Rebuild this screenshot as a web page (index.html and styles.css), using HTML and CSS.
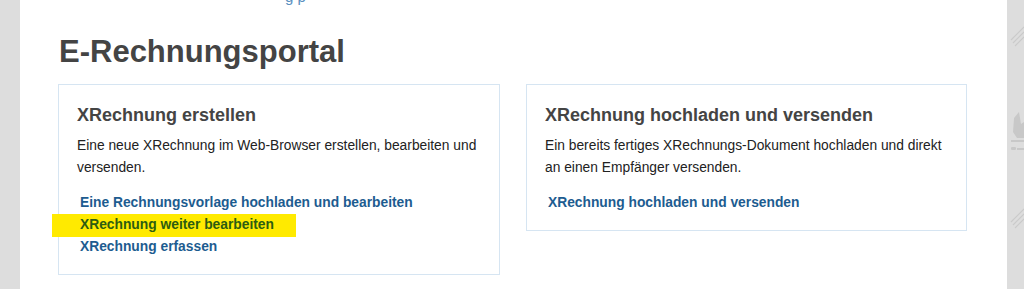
FILE: index.html
```html
<!DOCTYPE html>
<html lang="de">
<head>
<meta charset="utf-8">
<title>E-Rechnungsportal</title>
<link rel="stylesheet" href="styles.css">
</head>
<body>
<div class="side side-left"></div>
<main class="page">
  <div class="topline"><a class="toplink" href="#">g p</a></div>
  <h1 class="title">E-Rechnungsportal</h1>
  <div class="grid">
    <section class="card card-a">
      <h2 class="card-title">XRechnung erstellen</h2>
      <p class="card-text">Eine neue XRechnung im Web-Browser erstellen, bearbeiten und versenden.</p>
      <ul class="links">
        <li><a href="#">Eine Rechnungsvorlage hochladen und bearbeiten</a></li>
        <li class="hl"><a href="#">XRechnung weiter bearbeiten</a></li>
        <li><a href="#">XRechnung erfassen</a></li>
      </ul>
    </section>
    <section class="card">
      <h2 class="card-title">XRechnung hochladen und versenden</h2>
      <p class="card-text">Ein bereits fertiges XRechnungs-Dokument hochladen und direkt an einen Empfänger versenden.</p>
      <ul class="links">
        <li><a href="#">XRechnung hochladen und versenden</a></li>
      </ul>
    </section>
    <section class="card card-next"></section>
  </div>
</main>
<div class="side side-right">
  <svg class="wm" width="17" height="289" viewBox="0 0 17 289">
    <g fill="none" stroke="#cacaca" stroke-width="1.2">
      <path d="M4 40 L17 27 M6 43 L17 32 M8 46 L17 37"/>
      <path d="M4 222 L17 209 M6 225 L17 214 M8 228 L17 219"/>
    </g>
    <g fill="#c8c8c8">
      <path d="M7 118 L12 112 L14 124 L17 122 L17 138 L10 138 L6 132 Z"/>
      <rect x="4" y="140" width="13" height="2"/>
      <rect x="4" y="147" width="5" height="3" rx="1"/>
      <rect x="10" y="148" width="7" height="2"/>
    </g>
  </svg>
</div>
</body>
</html>
```
FILE: styles.css
```css
* { box-sizing: border-box; }
html, body { margin: 0; padding: 0; }
body {
  display: flex;
  background: #dddddd;
  font-family: "Liberation Sans", Arial, sans-serif;
  height: 289px;
  overflow: hidden;
}
.side { flex: 0 0 auto; }
.side-left { width: 20px; }
.side-right { width: 17px; }
.wm { display: block; }
.page {
  flex: 0 0 987px;
  background: #ffffff;
  padding: 0 40px 0 38px;
}
.topline { height: 28px; position: relative; overflow: hidden; }
.toplink {
  position: absolute;
  left: 227px;
  top: -12px;
  color: #5a8fc0;
  font-size: 15px;
  text-decoration: none;
}
.title {
  margin: 4px 0 0 1px;
  font-size: 31px;
  line-height: 40px;
  font-weight: bold;
  color: #444444;
}
.grid {
  margin-top: 12px;
  display: grid;
  grid-template-columns: 442px 441px;
  column-gap: 26px;
  row-gap: 14px;
  align-items: start;
}
.card {
  border: 1px solid #d6e5f2;
  padding: 19px 12px 16px 18px;
}
.card-next { height: 40px; }
.card-title {
  margin: 0;
  font-size: 18px;
  line-height: 22px;
  font-weight: bold;
  color: #444444;
}
.card-text {
  margin: 9px 0 0;
  font-size: 13.8px;
  line-height: 22px;
  color: #222222;
}
.links {
  list-style: none;
  margin: 13px 0 0;
  padding: 0;
}
.links li {
  font-size: 13.8px;
  line-height: 22px;
  font-weight: bold;
  padding-left: 3px;
}
.links a { color: #1d5c90; text-decoration: none; }
.links li.hl {
  background: #ffea00;
  margin: 0 0 -1px -25px;
  padding: 0 0 1px 28px;
  width: 244px;
}
.links li.hl a { color: #2d5d12; }
```
